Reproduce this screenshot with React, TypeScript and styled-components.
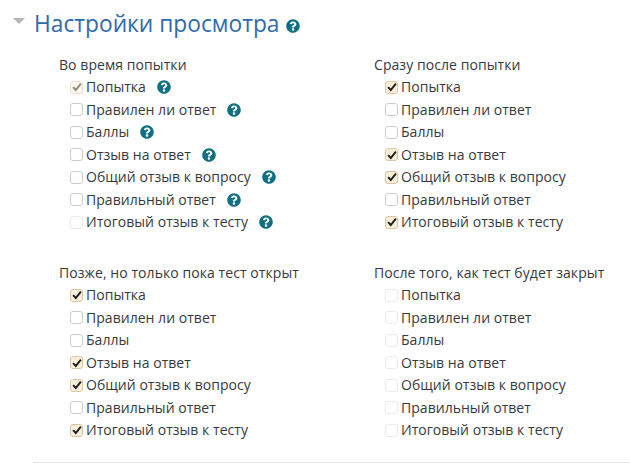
import { FC } from 'react';
import styled, { createGlobalStyle } from 'styled-components';
import { FaQuestionCircle } from 'react-icons/fa';

const GlobalStyle = createGlobalStyle`
  html, body {
    margin: 0;
    padding: 0;
    background: #fff;
    overflow: hidden;
  }
  body {
    font-family: "Open Sans", "Liberation Sans", sans-serif;
    color: #373a3c;
  }
`;

const Page = styled.div`
  width: 630px;
  height: 463px;
  box-sizing: border-box;
  padding-top: 7px;
  position: relative;
  overflow: hidden;
`;

const Header = styled.div`
  display: flex;
  align-items: center;
  height: 34px;
  padding-left: 13px;
`;

const Caret = styled.span`
  width: 0;
  height: 0;
  border-left: 6.5px solid transparent;
  border-right: 6.5px solid transparent;
  border-top: 6.5px solid #b4b4b4;
  margin-right: 9px;
  margin-top: -6px;
`;

const Title = styled.h3`
  margin: 0;
  font-size: 22.75px;
  font-weight: 400;
  line-height: 34px;
  color: #2f6bac;
`;

const TitleHelp = styled.span`
  display: inline-flex;
  margin-left: 7px;
  margin-top: 3px;
  color: #0f6f83;
  font-size: 14px;
`;

const Grid = styled.div`
  display: grid;
  grid-template-columns: 315px 255px;
  row-gap: 28.5px;
  padding: 13px 0 0 60px;
`;

const Group = styled.div`
  display: flex;
  flex-direction: column;
`;

const GroupTitle = styled.div`
  font-size: 14px;
  line-height: 22px;
  height: 22px;
  margin-left: -1px;
  letter-spacing: 0.07px;
  color: #373a3c;
`;

const Row = styled.div`
  display: flex;
  align-items: center;
  height: 22.5px;
  padding-left: 10px;
`;

type BoxState = 'on' | 'muted' | 'off' | 'faded';

const Box = styled.span<{ $state: BoxState }>`
  flex: none;
  box-sizing: border-box;
  width: 13px;
  height: 13px;
  margin-right: 3px;
  border-radius: 3px;
  display: flex;
  align-items: center;
  justify-content: center;
  border: 1px solid
    ${({ $state }) =>
      $state === 'on' ? '#d9c9a3' : $state === 'muted' ? '#ece4d2' : $state === 'off' ? '#cdcdcd' : '#ebebeb'};
  background: ${({ $state }) =>
    $state === 'on' ? '#f8eed9' : $state === 'muted' ? '#fbf7ee' : '#fff'};
  color: ${({ $state }) => ($state === 'on' ? '#1c1c1c' : '#8f8a7e')};
`;

const Label = styled.span`
  font-size: 14px;
  line-height: 20px;
  letter-spacing: 0.03px;
  color: #373a3c;
  white-space: nowrap;
`;

const Help = styled.span`
  display: inline-flex;
  margin-left: 11px;
  color: #0f6f83;
  font-size: 14px;
`;

const Divider = styled.div`
  position: absolute;
  left: 33px;
  right: 0;
  bottom: 0;
  height: 1px;
  background: #e4e4e4;
`;

const Check = () => (
  <svg width="10" height="10" viewBox="0 0 9 9" fill="none">
    <path d="M1 4.6 L3.4 7.2 L8 1.4" stroke="currentColor" strokeWidth="1.7" />
  </svg>
);

const LABELS = [
  'Попытка',
  'Правилен ли ответ',
  'Баллы',
  'Отзыв на ответ',
  'Общий отзыв к вопросу',
  'Правильный ответ',
  'Итоговый отзыв к тесту',
];

interface IGroup {
  title: string;
  states: BoxState[];
  help?: boolean;
}

const GROUPS: IGroup[] = [
  {
    title: 'Во время попытки',
    states: ['muted', 'off', 'off', 'off', 'off', 'off', 'faded'],
    help: true,
  },
  {
    title: 'Сразу после попытки',
    states: ['on', 'off', 'off', 'on', 'on', 'off', 'on'],
  },
  {
    title: 'Позже, но только пока тест открыт',
    states: ['on', 'off', 'off', 'on', 'on', 'off', 'on'],
  },
  {
    title: 'После того, как тест будет закрыт',
    states: ['faded', 'faded', 'faded', 'faded', 'faded', 'faded', 'faded'],
  },
];

const OptionGroup: FC<IGroup> = ({ title, states, help }) => (
  <Group>
    <GroupTitle>{title}</GroupTitle>
    {LABELS.map((label, i) => (
      <Row key={label}>
        <Box $state={states[i]}>
          {(states[i] === 'on' || states[i] === 'muted') && <Check />}
        </Box>
        <Label>{label}</Label>
        {help && (
          <Help>
            <FaQuestionCircle />
          </Help>
        )}
      </Row>
    ))}
  </Group>
);

const App: FC = () => (
  <Page>
    <GlobalStyle />
    <Header>
      <Caret />
      <Title>Настройки просмотра</Title>
      <TitleHelp>
        <FaQuestionCircle />
      </TitleHelp>
    </Header>
    <Grid>
      {GROUPS.map((group) => (
        <OptionGroup key={group.title} {...group} />
      ))}
    </Grid>
    <Divider />
  </Page>
);

export default App;
